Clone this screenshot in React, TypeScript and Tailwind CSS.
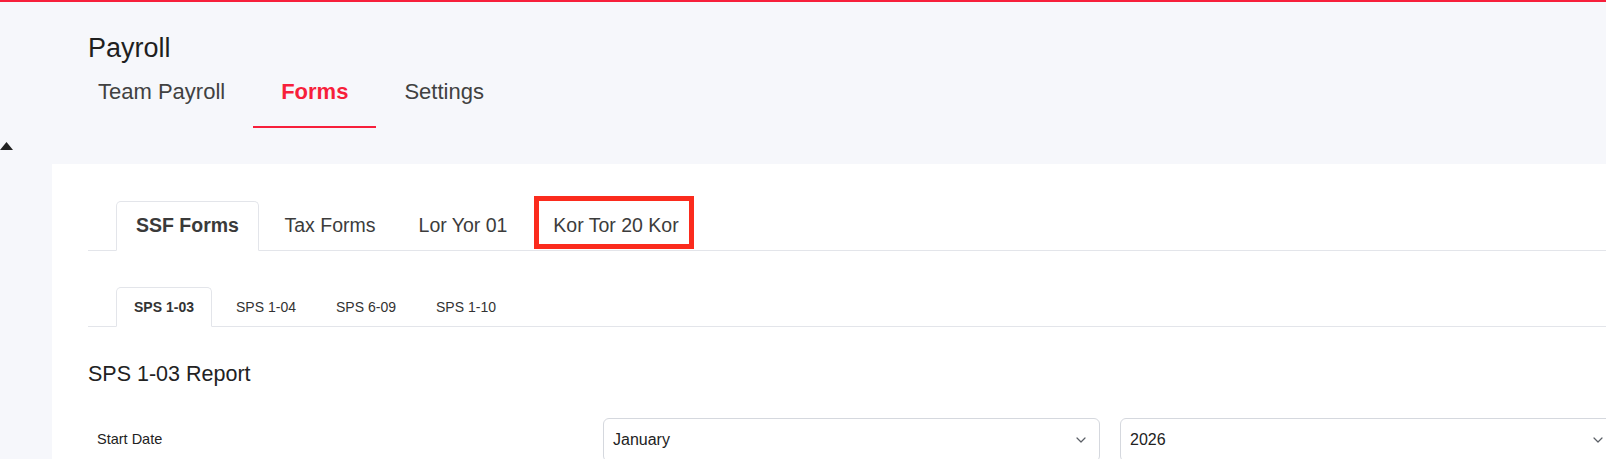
import React, { useState } from 'react'

const navTabs = ['Team Payroll', 'Forms', 'Settings']

const formTabs = [
  { label: 'SSF Forms', w: 'w-[143px]' },
  { label: 'Tax Forms', w: 'w-[142px]' },
  { label: 'Lor Yor 01', w: 'w-[124px]' },
  { label: 'Kor Tor 20 Kor', w: 'w-[182px]' },
]

const spsTabs = [
  { label: 'SPS 1-03', w: 'w-[96px]' },
  { label: 'SPS 1-04', w: 'w-[108px]' },
  { label: 'SPS 6-09', w: 'w-[92px]' },
  { label: 'SPS 1-10', w: 'w-[108px]' },
]

const Chevron = () => (
  <svg width="10" height="6" viewBox="0 0 10 6" fill="none">
    <polyline points="1,1 5,5 9,1" stroke="#5b5f66" strokeWidth="1.2" strokeLinecap="round" strokeLinejoin="round" />
  </svg>
)

const FakeSelect: React.FC<{ value: string }> = ({ value }) => (
  <div className="h-[44px] w-[497px] border border-[#d5d8de] rounded-[6px] bg-white flex items-center justify-between pl-[9px] pr-[13px] text-[16px] text-[#222]">
    <span>{value}</span>
    <Chevron />
  </div>
)

const App: React.FC = () => {
  const [nav, setNav] = useState('Forms')
  const [formTab, setFormTab] = useState('SSF Forms')
  const [sps, setSps] = useState('SPS 1-03')

  return (
    <div className="w-[1606px] h-[459px] overflow-hidden bg-[#f6f7fb] font-['Liberation_Sans',Arial,sans-serif] flex flex-col">
      <div className="h-[2px] bg-[#f71f3b] shrink-0" />
      <div className="flex flex-1 min-h-0">
        {/* left strip */}
        <aside className="w-[52px] shrink-0">
          <div className="mt-[140px]">
            <svg width="13" height="8" viewBox="0 0 13 8">
              <polygon points="0,8 6.5,0 13,8" fill="#222" />
            </svg>
          </div>
        </aside>

        <main className="flex-1 min-w-0 flex flex-col">
          {/* header */}
          <div className="pl-[36px] mt-[31px] text-[27px] leading-[30px] text-[#1f1f1f]">Payroll</div>
          <nav className="flex ml-[18px]">
            {navTabs.map(t => {
              const active = t === nav
              return (
                <button
                  key={t}
                  onClick={() => setNav(t)}
                  className={`px-[28px] pt-4 pb-[21px] text-[22px] leading-[26px] border-b-2 ${
                    active ? 'border-[#f71f3b] text-[#f71f3b] font-bold' : 'border-transparent text-[#414141]'
                  }`}
                >
                  {t}
                </button>
              )
            })}
          </nav>

          {/* panel */}
          <section className="mt-[36px] flex-1 bg-white pl-[36px] pt-[37px]">
            <ul className="flex border-b border-[#e3e5ea] pl-[28px]">
              {formTabs.map(t => {
                const active = t.label === formTab
                return (
                  <li
                    key={t.label}
                    onClick={() => setFormTab(t.label)}
                    className={`relative ${t.w} h-[50px] -mb-px flex items-center justify-center text-[19.5px] cursor-pointer border rounded-t-[5px] ${
                      active ? 'border-[#e3e5ea] border-b-white bg-white font-bold text-[#3a3a3a]' : 'border-transparent text-[#3c3c3c]'
                    }`}
                  >
                    {t.label}
                    {t.label === 'Kor Tor 20 Kor' && (
                      <span className="absolute left-[8px] top-[-6px] w-[160px] h-[53px] border-[5px] border-[#fb2b1d] pointer-events-none" />
                    )}
                  </li>
                )
              })}
            </ul>

            <ul className="flex border-b border-[#e3e5ea] pl-[28px] mt-[36px]">
              {spsTabs.map(t => {
                const active = t.label === sps
                return (
                  <li
                    key={t.label}
                    onClick={() => setSps(t.label)}
                    className={`${t.w} h-[40px] -mb-px flex items-center justify-center text-[14px] cursor-pointer border rounded-t-[5px] ${
                      active ? 'border-[#e3e5ea] border-b-white bg-white font-bold text-[#333]' : 'border-transparent text-[#333]'
                    }`}
                  >
                    {t.label}
                  </li>
                )
              })}
            </ul>

            <h3 className="mt-[34px] text-[21.5px] leading-[26px] text-[#222] font-normal">SPS 1-03 Report</h3>

            <div className="mt-[31px] flex gap-x-[20px]">
              <div className="w-[495px] shrink-0 pl-[9px] flex items-center text-[14.5px] text-[#222]">Start Date</div>
              <div className="shrink-0">
                <FakeSelect value="January" />
              </div>
              <div className="shrink-0">
                <FakeSelect value="2026" />
              </div>
            </div>
          </section>
        </main>
      </div>
    </div>
  )
}

export default App
